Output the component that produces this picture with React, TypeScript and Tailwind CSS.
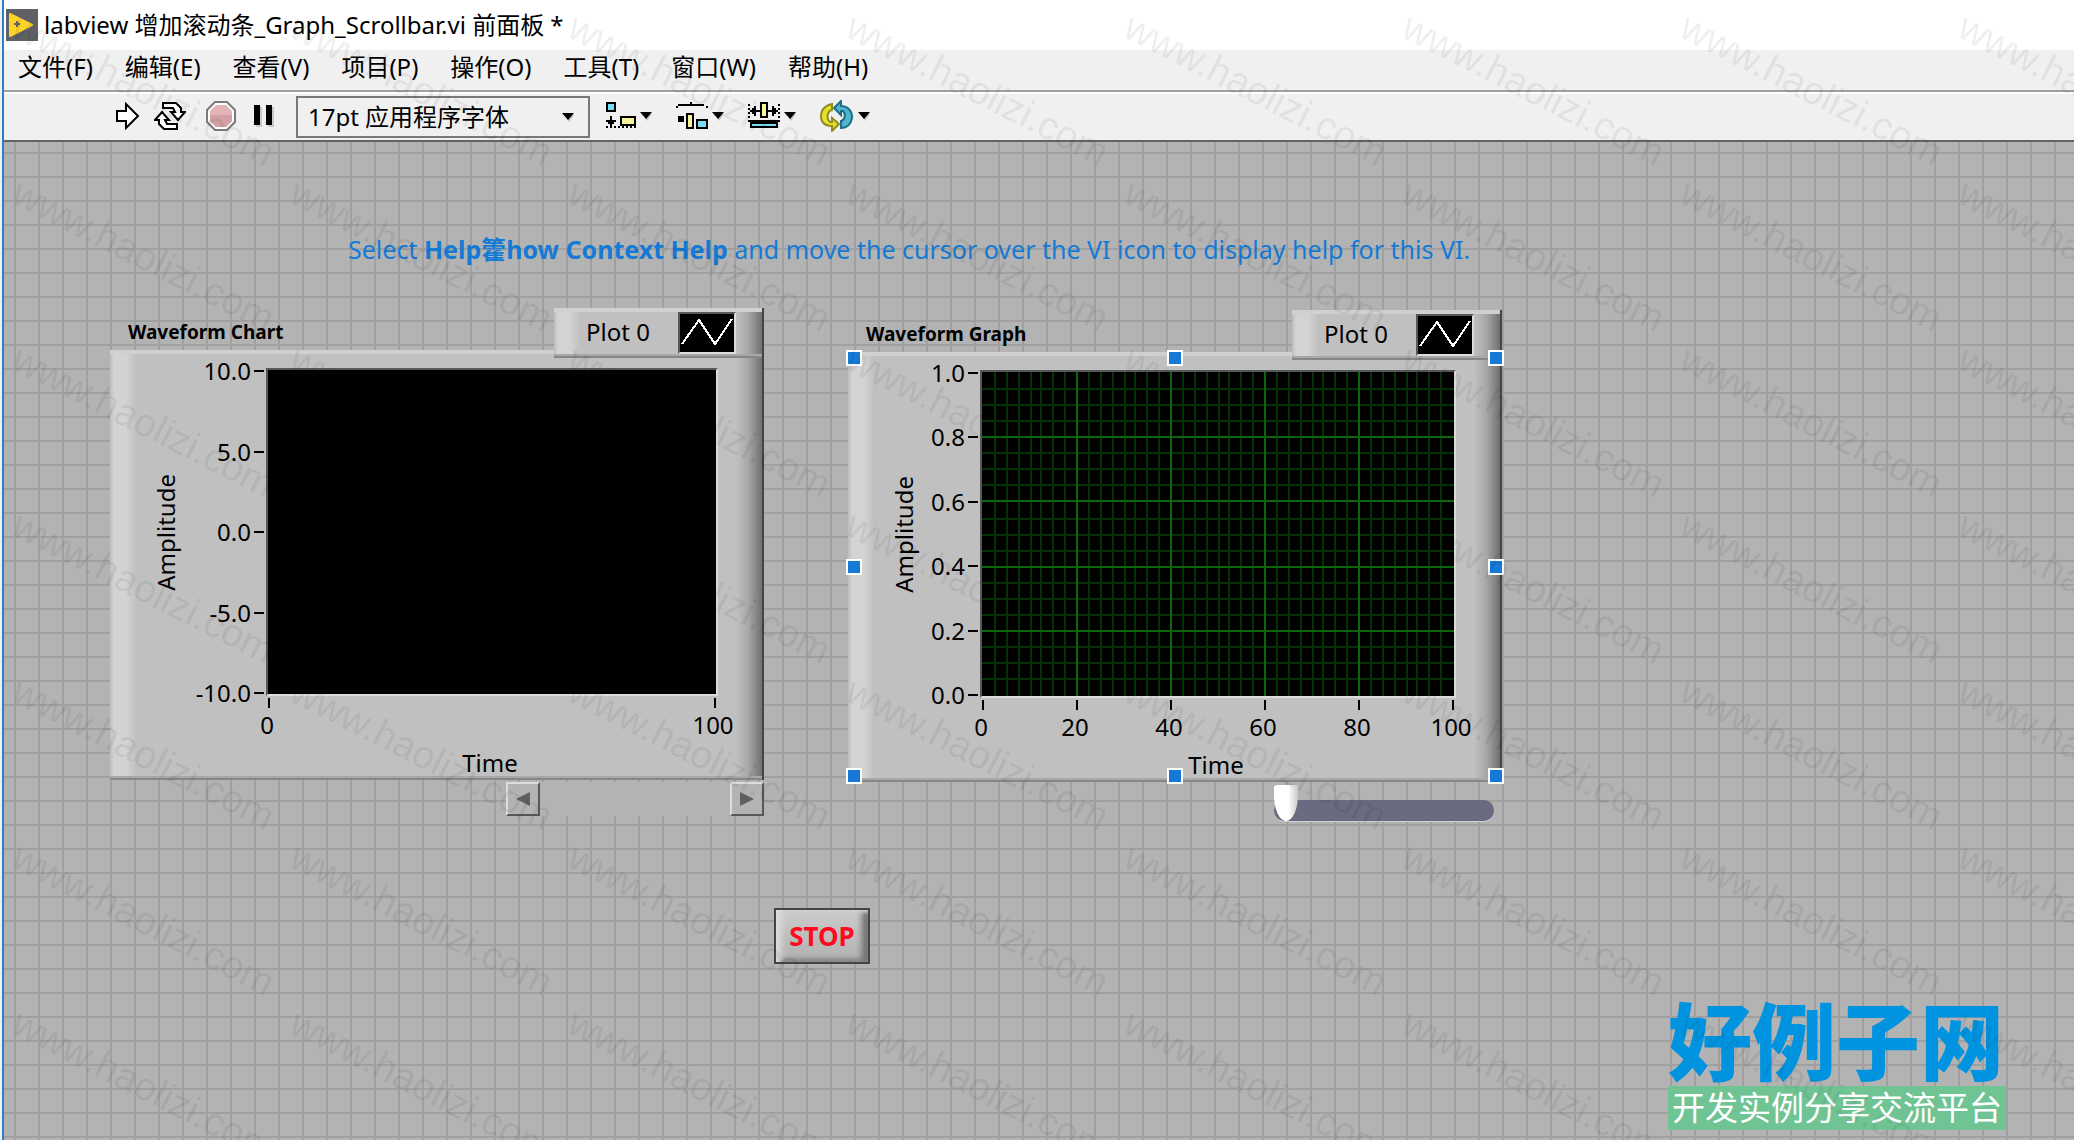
import { useState } from "react";

const menuItems = ["文件(F)", "编辑(E)", "查看(V)", "项目(P)", "操作(O)", "工具(T)", "窗口(W)", "帮助(H)"];

const watermarks = Array.from({ length: 56 }, (_, i) => i);

interface WaveformProps {
    title: string;
    yLabels: string[];
    xLabels: string[];
    plotClass: string;
    grid?: boolean;
}

const LabviewLogo = () => (
    <svg width="32" height="32" viewBox="0 0 32 32">
        <rect width="32" height="32" fill="#5f6166" />
        <path d="M4 5l22 11L4 27z" fill="#fdd32a" stroke="#fdd32a" strokeWidth="2" strokeLinejoin="round" />
        <path d="M8 15h6M11 12v6" stroke="#5f6166" strokeWidth="2" />
    </svg>
);

const RunIcon = () => (
    <svg width="24" height="28" viewBox="0 0 24 28">
        <path d="M1 9h9V2l12 12-12 12v-7H1z" fill="#fff" stroke="#000" strokeWidth="2" />
    </svg>
);

const RunContinuousIcon = () => (
    <svg width="32" height="28" viewBox="0 0 32 28">
        <path d="M9 1h13l5 5v4h4l-7 8-7-8h4l-2-4H9z" fill="#fff" stroke="#000" strokeWidth="2" />
        <path d="M23 27H10l-5-5v-4H1l7-8 7 8h-4l2 4h10z" fill="#fff" stroke="#000" strokeWidth="2" />
    </svg>
);

const AbortIcon = () => (
    <svg width="30" height="30" viewBox="0 0 30 30">
        <path d="M9 1h12l8 8v12l-8 8H9l-8-8V9z" fill="#fff" stroke="#7a7a7a" strokeWidth="2" />
        <path d="M10 4h10l6 6v10l-6 6H10l-6-6V10z" fill="#e2b3b7" />
        <path d="M4 14h22v6l-6 6H10l-6-6z" fill="#d4a0a5" />
    </svg>
);

const PauseIcon = () => (
    <svg width="20" height="22" viewBox="0 0 20 22">
        <path d="M2 2h6v20H2zM14 2h6v20h-6z" fill="#c8c8c8" />
        <path d="M0 0h6v20H0zM12 0h6v20h-6z" fill="#000" />
    </svg>
);

const AlignIcon = () => (
    <svg width="30" height="28" viewBox="0 0 30 28" shapeRendering="crispEdges">
        <rect x="1" y="1" width="8" height="8" fill="#74dcf4" stroke="#000" strokeWidth="2" />
        <path d="M4 14h2v4h4v2H8v2H6v2H4v-2H2v-2H0v-2h4z" fill="#000" />
        <rect x="15" y="15" width="14" height="8" fill="#f8f49a" stroke="#000" strokeWidth="2" />
        <path d="M0 25h30" stroke="#000" strokeWidth="2" strokeDasharray="2 2" />
    </svg>
);

const DistributeIcon = () => (
    <svg width="32" height="28" viewBox="0 0 32 28" shapeRendering="crispEdges">
        <path d="M0 6V4h2V2h12V0h2v2h12v2h4v2h-2V4H2v2z" fill="#000" />
        <rect x="2" y="14" width="6" height="6" fill="#000" />
        <rect x="11" y="12" width="6" height="14" fill="#f8f49a" stroke="#000" strokeWidth="2" />
        <rect x="21" y="18" width="10" height="8" fill="#74dcf4" stroke="#000" strokeWidth="2" />
    </svg>
);

const ResizeIcon = () => (
    <svg width="32" height="28" viewBox="0 0 32 28" shapeRendering="crispEdges">
        <path d="M1 2v16M31 2v16" stroke="#000" strokeWidth="2" strokeDasharray="2 2" />
        <path d="M2 8h2V6h2V4h2v4h4v2H8v4H6v-2H4v-2H2zM30 8h-2V6h-2V4h-2v4h-4v2h4v4h2v-2h2v-2h2z" fill="#000" />
        <rect x="13" y="1" width="6" height="14" fill="#f8f49a" stroke="#000" strokeWidth="2" />
        <path d="M0 19h32" stroke="#000" strokeWidth="2" />
        <rect x="3" y="21" width="26" height="4" fill="#74dcf4" stroke="#000" strokeWidth="2" />
    </svg>
);

const ReorderIcon = () => (
    <svg width="34" height="32" viewBox="0 0 34 32">
        <path
            d="M12 4v6c-5 1-6 9-2 12h2v-4l7 6-7 7v-5C3 26-1 20 2 11c2-4 5-6 10-7z"
            fill="#e6e02c"
            stroke="#8f8b1c"
            strokeWidth="2"
        />
        <path
            d="M21 28v-7c4-1 5-7 2-10h-2v4l-7-7 7-7v5c7 0 12 6 11 12-1 6-5 10-11 10z"
            fill="#4fb4cc"
            stroke="#1c6f86"
            strokeWidth="2"
        />
    </svg>
);

const DownArrow = () => (
    <svg width="12" height="9" viewBox="0 0 12 9">
        <path d="M3 2h9l-5 7z" fill="#c4c4c4" />
        <path d="M0 0h12L6 7z" fill="#000" />
    </svg>
);

const PlotSample = () => (
    <svg width="54" height="38" viewBox="0 0 54 38" shapeRendering="crispEdges">
        <path d="M2 30L19 6l16 24L52 5" fill="none" stroke="#fff" strokeWidth="2" />
    </svg>
);

// lines sit on even pixels, every eighth column and fourth row is a major one
const PlotGrid = () => {
    const cols = Array.from({ length: 39 }, (_, i) => i + 1);
    const rows = Array.from({ length: 19 }, (_, i) => i + 1);
    const lineX = (i: number) => 2 * Math.round(i * 5.875) + 1;
    const lineY = (i: number) => 2 * Math.round(i * 8.06) + 1;
    return (
        <svg className="block" width="472" height="324" viewBox="0 0 472 324" shapeRendering="crispEdges">
            <g stroke="#083008" strokeWidth="2">
                {cols.map((i) => <path key={i} d={`M${lineX(i)} 0V324`} />)}
                {rows.map((i) => <path key={i} d={`M0 ${lineY(i)}H472`} />)}
            </g>
            <g stroke="#0c660c" strokeWidth="2">
                {cols.filter((i) => i % 8 === 0).map((i) => <path key={i} d={`M${lineX(i)} 0V324`} />)}
                {rows.filter((i) => i % 4 === 0).map((i) => <path key={i} d={`M0 ${lineY(i)}H472`} />)}
            </g>
        </svg>
    );
};

const Waveform = ({ title, yLabels, xLabels, plotClass, grid }: WaveformProps) => {
    return (
        <div className="flex w-[654px] flex-col">
            <div className="flex h-[42px] items-start justify-between">
                <h2 className="pt-3 pl-[18px] text-[19px] leading-6 font-bold">{title}</h2>
                <div className="relative z-10 flex h-[50px] w-[210px] items-start bg-[linear-gradient(to_right,#bdbdbd_0px,#d3d3d3_4px,#d3d3d3_16px,#c0c0c0_26px,#c0c0c0_182px,#a8a8a8_194px,#707070_208px)] pt-1 pl-8 shadow-[inset_-2px_0_0_#444444,inset_0_-2px_0_#868686,inset_0_-4px_0_#a8a8a8,inset_0_4px_0_#d0d0d0]">
                    <span className="w-[92px] pt-2 leading-6">Plot 0</span>
                    <span className="border-2 border-t-[#585858] border-r-[#dcdcdc] border-b-[#dcdcdc] border-l-[#585858] bg-black">
                        <PlotSample />
                    </span>
                </div>
            </div>
            <div className="flex h-[430px] bg-[linear-gradient(to_right,#bdbdbd_0px,#d3d3d3_4px,#d3d3d3_16px,#c0c0c0_26px,#c0c0c0_626px,#a8a8a8_638px,#707070_652px)] pt-[18px] pr-[46px] pl-10 shadow-[inset_-2px_0_0_#444444,inset_0_-2px_0_#868686,inset_0_-4px_0_#a8a8a8,inset_0_4px_0_#d0d0d0]">
                <div className="flex h-[328px] w-8 items-center justify-center">
                    <span className="rotate-180 leading-8 [writing-mode:vertical-rl]">Amplitude</span>
                </div>
                <div className="-mt-[13px] flex h-[354px] grow flex-col justify-between pr-[2px]">
                    {yLabels.map((label) => (
                        <div key={label} className="flex h-8 items-center justify-end gap-[3px]">
                            <span>{label}</span>
                            <span className="h-[2px] w-[10px] bg-black"></span>
                        </div>
                    ))}
                </div>
                <div className={plotClass}>
                    <div className="h-[328px] border-2 border-t-[#585858] border-r-[#dcdcdc] border-b-[#dcdcdc] border-l-[#585858] bg-black">
                        {grid && <PlotGrid />}
                    </div>
                    <div className="-mx-[21px] flex justify-between pt-[2px]">
                        {xLabels.map((label) => (
                            <div key={label} className="flex w-12 flex-col items-center gap-[5px]">
                                <span className="h-[10px] w-[2px] bg-black"></span>
                                <span className="pr-1 leading-6">{label}</span>
                            </div>
                        ))}
                    </div>
                    <div className="pt-[14px] pr-1 text-center leading-6">Time</div>
                </div>
            </div>
        </div>
    );
};

const Handle = ({ place }: { place: string }) => (
    <span className={`absolute z-20 h-4 w-4 border-2 border-white bg-[#147ad6] ${place}`}></span>
);

const App = () => {
    const [position, setPosition] = useState(0);

    return (
        <div className="relative flex min-h-screen overflow-hidden bg-[#f0f0f0] pl-[2px] font-['Noto_Sans','Noto_Sans_CJK_SC',sans-serif] text-[24px] text-black">
            <div className="flex grow flex-col border-l-2 border-[#2a80c8]">
                <header className="flex h-[50px] items-center gap-[6px] bg-white pl-[2px]">
                    <LabviewLogo />
                    <h1 className="leading-8 whitespace-nowrap">labview 增加滚动条_Graph_Scrollbar.vi 前面板 *</h1>
                </header>
                <nav className="flex h-10 items-center gap-8 bg-[#f0f0f0] pb-[6px] pl-[14px]">
                    {menuItems.map((item) => (
                        <button key={item} className="leading-8 whitespace-nowrap">{item}</button>
                    ))}
                </nav>
                <div className="flex h-[52px] items-center border-t-2 border-b-2 border-t-[#a0a0a0] border-b-[#646464] bg-[#f0f0f0] pl-28 shadow-[inset_0_2px_0_#ffffff]">
                    <button aria-label="Run" className="mr-[14px]"><RunIcon /></button>
                    <button aria-label="Run continuously" className="mr-5"><RunContinuousIcon /></button>
                    <button aria-label="Abort" className="mr-[18px]"><AbortIcon /></button>
                    <button aria-label="Pause" className="mr-[22px]"><PauseIcon /></button>
                    <div className="relative mt-[2px] mr-4">
                        <select
                            aria-label="Font"
                            className="block h-[42px] w-[294px] appearance-none border-2 border-[#787878] bg-[#f0f0f0] pl-[10px] leading-8"
                        >
                            <option>17pt 应用程序字体</option>
                        </select>
                        <span className="pointer-events-none absolute top-0 right-4 flex h-[42px] items-center"><DownArrow /></span>
                    </div>
                    <button aria-label="Align objects" className="mr-6 flex items-center gap-1"><AlignIcon /><DownArrow /></button>
                    <button aria-label="Distribute objects" className="mr-6 flex items-center gap-1"><DistributeIcon /><DownArrow /></button>
                    <button aria-label="Resize objects" className="mr-6 flex items-center gap-1"><ResizeIcon /><DownArrow /></button>
                    <button aria-label="Reorder" className="flex items-center gap-1"><ReorderIcon /><DownArrow /></button>
                </div>

                <main className="relative min-h-[998px] grow bg-[#b3b3b3] bg-[linear-gradient(to_right,#a0a0a0_2px,transparent_2px),linear-gradient(to_bottom,#a0a0a0_2px,transparent_2px)] bg-[size:24px_24px] bg-[position:10px_10px]">
                    <p className="absolute top-[91px] left-[344px] text-[25px] leading-8 whitespace-nowrap text-[#147ad6]">
                        Select <b>Help籗how Context Help</b> and move the cursor over the VI icon to display help for this VI.
                    </p>

                    <div className="absolute top-[166px] left-[106px]">
                        <Waveform
                            title="Waveform Chart"
                            yLabels={["10.0", "5.0", "0.0", "-5.0", "-10.0"]}
                            xLabels={["0", "100"]}
                            plotClass="w-[452px]"
                        />
                        <div className="mt-[2px] ml-auto flex h-[34px] w-[258px] justify-between bg-[#b3b3b3]">
                            <button aria-label="Scroll left" className="flex h-[34px] w-[34px] items-center justify-center border-2 border-t-[#dcdcdc] border-r-[#585858] border-b-[#585858] border-l-[#dcdcdc]">
                                <svg width="14" height="14" viewBox="0 0 14 14"><path d="M14 0v14L0 7z" fill="#606060" /></svg>
                            </button>
                            <button aria-label="Scroll right" className="flex h-[34px] w-[34px] items-center justify-center border-2 border-t-[#dcdcdc] border-r-[#585858] border-b-[#585858] border-l-[#dcdcdc]">
                                <svg width="14" height="14" viewBox="0 0 14 14"><path d="M0 0v14l14-7z" fill="#606060" /></svg>
                            </button>
                        </div>
                    </div>

                    <div className="absolute top-[168px] left-[844px]">
                        <Waveform
                            title="Waveform Graph"
                            yLabels={["1.0", "0.8", "0.6", "0.4", "0.2", "0.0"]}
                            xLabels={["0", "20", "40", "60", "80", "100"]}
                            plotClass="w-[476px]"
                            grid
                        />
                        <div className="pointer-events-none absolute inset-x-[-2px] top-10 bottom-[-2px]">
                            <Handle place="top-0 left-0" />
                            <Handle place="top-0 left-1/2 -translate-x-1/2" />
                            <Handle place="top-0 right-0" />
                            <Handle place="top-1/2 left-0 -translate-y-1/2" />
                            <Handle place="top-1/2 right-0 -translate-y-1/2" />
                            <Handle place="bottom-0 left-0" />
                            <Handle place="bottom-0 left-1/2 -translate-x-1/2" />
                            <Handle place="right-0 bottom-0" />
                        </div>
                    </div>

                    <input
                        type="range"
                        aria-label="Scroll position"
                        value={position}
                        onChange={(e) => setPosition(Number(e.target.value))}
                        className="absolute top-[643px] left-[1270px] flex h-9 w-[220px] appearance-none items-end bg-transparent [&::-webkit-slider-runnable-track]:mt-[15px] [&::-webkit-slider-runnable-track]:h-[21px] [&::-webkit-slider-runnable-track]:rounded-[10px] [&::-webkit-slider-runnable-track]:bg-[#6a6a80] [&::-webkit-slider-runnable-track]:shadow-[0_1px_0_#d0d0d0] [&::-webkit-slider-thumb]:-mt-[15px] [&::-webkit-slider-thumb]:h-9 [&::-webkit-slider-thumb]:w-6 [&::-webkit-slider-thumb]:appearance-none [&::-webkit-slider-thumb]:rounded-[3px_3px_12px_12px/3px_3px_26px_26px] [&::-webkit-slider-thumb]:bg-[linear-gradient(to_right,#ffffff_60%,#c8c8c8)]"
                    />

                    <button className="absolute top-[766px] left-[770px] h-14 w-24 border-2 border-[#444444] bg-[linear-gradient(to_bottom,#cccccc,#b0b0b0)] text-[26px] leading-8 font-bold text-[#ff0a1e] shadow-[inset_8px_0_6px_-3px_#dedede,inset_0_4px_4px_-2px_#d8d8d8,inset_-8px_0_6px_-2px_#6e6e6e,inset_0_-5px_4px_-2px_#7c7c7c]">
                        STOP
                    </button>

                    <a href="#" className="absolute right-[68px] bottom-[10px] flex w-[338px] flex-col font-['Noto_Sans_CJK_SC',sans-serif]">
                        <span className="pb-1 text-[84px] leading-[88px] font-black whitespace-nowrap text-[#0094e0]">好例子网</span>
                        <span className="h-11 bg-[#70c494] text-center text-[33px] leading-10 whitespace-nowrap text-white">开发实例分享交流平台</span>
                    </a>
                </main>
            </div>

            <div aria-hidden="true" className="pointer-events-none absolute top-[2px] left-[6px] z-30 grid grid-cols-[repeat(8,278px)] auto-rows-[166px] font-['Liberation_Sans',sans-serif] text-[39px] leading-10 text-black/8">
                {watermarks.map((i) => (
                    <span key={i} className="origin-bottom-left rotate-[27deg] self-start whitespace-nowrap">www.haolizi.com</span>
                ))}
            </div>
        </div>
    );
};

export default App;
